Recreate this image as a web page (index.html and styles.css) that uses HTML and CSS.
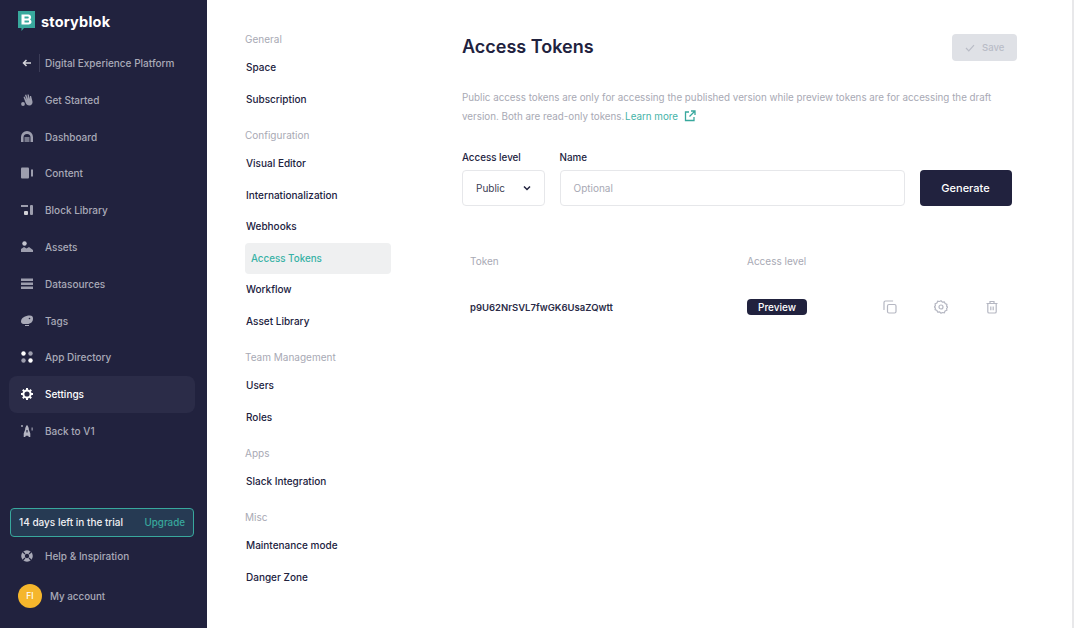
FILE: index.html
```html
<!DOCTYPE html>
<html lang="en">
<head>
  <meta charset="UTF-8">
  <title>Access Tokens - Storyblok</title>
  <link rel="stylesheet" href="styles.css">
</head>
<body>
  <div class="app">
    <aside class="sidebar">
      <div class="logo">
        <svg class="logo-mark" width="17" height="20" viewBox="0 0 17 20"><path d="M0 0h17v17H6l-2.500 3V17H0z" fill="#38a89d"/><path d="M3.500 3.500h7c3 0 3.300 4 1.500 5 2.300 1 2 5-1.300 5H3.500zM6.500 5.500v2h3.500c1 0 1-2 0-2zM6.500 9.600v2h3.800c1.100 0 1.100-2 0-2z" fill="#fff" fill-rule="evenodd"/></svg>
        <span class="logo-text">storyblok</span>
      </div>
      <nav class="side-nav">
        <a class="side-item back">
          <svg width="12" height="12" viewBox="0 0 12 12"><path d="M10 6H3M5.500 3L2.500 6l3 3" fill="none" stroke="#d5d6dc" stroke-width="1.500"/></svg>
          <span class="back-rule"></span>
          <span>Digital Experience Platform</span>
        </a>
        <a class="side-item">
          <svg width="12" height="12" viewBox="0 0 12 12" fill="#9d9eae"><circle cx="2" cy="10" r="1.900"/><path d="M4.500 8.500L2.500 3l1-.5 2 3.500-1.500-5 1.200-.4L7 5 6.500 .5 7.700.4 8.800 5 9 2l1.100.1 1.400 5.400c.4 2-1 4-3.200 4-1.800 0-3.100-1.200-3.800-3z"/></svg>
          <span>Get Started</span>
        </a>
        <a class="side-item">
          <svg width="12" height="12" viewBox="0 0 12 12" fill="#9d9eae"><path d="M0 11V6a6 6 0 0 1 12 0v5H9.500V6.500a3.500 3.500 0 0 0-7 0V11z"/><rect x="3.500" y="6" width="5" height="5" opacity=".7"/></svg>
          <span>Dashboard</span>
        </a>
        <a class="side-item">
          <svg width="12" height="12" viewBox="0 0 12 12" fill="#9d9eae"><rect x="0" y="0.500" width="8" height="11" rx="1"/><rect x="10" y="2.500" width="2" height="7"/></svg>
          <span>Content</span>
        </a>
        <a class="side-item">
          <svg width="12" height="12" viewBox="0 0 12 12" fill="#9d9eae"><rect x="0" y="1" width="7" height="2"/><rect x="3" y="7" width="4" height="4" rx="1" fill="#fff" opacity=".8"/><rect x="9" y="1" width="3" height="10" rx="1"/></svg>
          <span>Block Library</span>
        </a>
        <a class="side-item">
          <svg width="12" height="12" viewBox="0 0 12 12" fill="#9d9eae"><circle cx="3.500" cy="2.500" r="2.200" fill="#c5c6d0"/><path d="M0 11V8l3-2 2.500 1.500L8 6l4 3v2z"/></svg>
          <span>Assets</span>
        </a>
        <a class="side-item">
          <svg width="12" height="12" viewBox="0 0 12 12" fill="#9d9eae"><rect y="0.500" width="12" height="2.500"/><rect y="4.500" width="12" height="2.500"/><rect y="8.500" width="12" height="2.500"/></svg>
          <span>Datasources</span>
        </a>
        <a class="side-item">
          <svg width="12" height="12" viewBox="0 0 12 12" fill="#a9aab8"><path d="M0 6.500C0 3 4 .5 9 .5c2 0 3 1 3 3 0 3-2 5.500-6 5.500H2.500C1 9 0 8 0 6.500z"/><rect x="4" y="10" width="4" height="1"/><circle cx="8.500" cy="3.500" r=".8" fill="#21223e"/></svg>
          <span>Tags</span>
        </a>
        <a class="side-item">
          <svg width="12" height="12" viewBox="0 0 12 12"><circle cx="2.500" cy="2.500" r="2.200" fill="#fff"/><circle cx="9.500" cy="2.500" r="2.200" fill="#9d9eae"/><circle cx="2.500" cy="9.500" r="2.200" fill="#9d9eae"/><circle cx="9.500" cy="9.500" r="2.200" fill="#fff"/></svg>
          <span>App Directory</span>
        </a>
        <a class="side-item active">
          <svg width="12" height="12" viewBox="0 0 12 12"><circle cx="6" cy="6" r="3.600" fill="none" stroke="#fff" stroke-width="2"/><path d="M6 0v2M6 10v2M0 6h2M10 6h2M1.800 1.800l1.400 1.400M8.800 8.800l1.400 1.400M1.800 10.200l1.400-1.400M8.800 3.200l1.400-1.400" stroke="#fff" stroke-width="2"/></svg>
          <span>Settings</span>
        </a>
        <a class="side-item">
          <svg width="12" height="12" viewBox="0 0 12 12" fill="#b4b5c2"><path d="M6 0c1.300 1.300 1.900 2.800 1.900 4.800L9.300 8.500V12H7.800L7.200 10.800H4.800L4.200 12H2.700V8.500L4.100 4.800C4.100 2.800 4.700 1.300 6 0z"/><circle cx="1" cy="1" r=".9"/><rect x="10.600" y="2.500" width="1" height="3"/><rect x="5.400" y="5" width="1.200" height="2.500" fill="#21223e"/></svg>
          <span>Back to V1</span>
        </a>
      </nav>
      <div class="side-bottom">
        <div class="trial"><span>14 days left in the trial</span><a class="upgrade">Upgrade</a></div>
        <a class="side-item help">
          <svg width="12" height="12" viewBox="0 0 12 12"><circle cx="6" cy="6" r="4" fill="none" stroke="#a9aab8" stroke-width="3.600"/><path d="M2 2l2 2M10 2L8 4M2 10l2-2M10 10L8 8" stroke="#21223e" stroke-width="1.200"/></svg>
          <span>Help &amp; Inspiration</span>
        </a>
        <a class="account"><span class="avatar">FI</span><span>My account</span></a>
      </div>
    </aside>

    <nav class="sub-nav">
      <h4>General</h4>
      <a>Space</a>
      <a>Subscription</a>
      <h4>Configuration</h4>
      <a>Visual Editor</a>
      <a>Internationalization</a>
      <a>Webhooks</a>
      <a class="current">Access Tokens</a>
      <a>Workflow</a>
      <a>Asset Library</a>
      <h4>Team Management</h4>
      <a>Users</a>
      <a>Roles</a>
      <h4>Apps</h4>
      <a>Slack Integration</a>
      <h4>Misc</h4>
      <a>Maintenance mode</a>
      <a>Danger Zone</a>
    </nav>

    <main class="content">
      <header class="head">
        <h1>Access Tokens</h1>
        <button class="save">
          <svg width="10" height="8" viewBox="0 0 10 8"><path d="M1 4l2.800 2.800L9 1.200" fill="none" stroke="#b9bcc6" stroke-width="1.200"/></svg>
          Save
        </button>
      </header>
      <p class="intro">Public access tokens are only for accessing the published version while preview tokens are for accessing the draft version. Both are read-only tokens. <span class="learn">Learn more</span> <svg class="learn-icon" width="12" height="12" viewBox="0 0 12 12"><path d="M5 2H1.500v8.500H10V7M7 1h4v4M11 1L5.500 6.500" fill="none" stroke="#38a89d" stroke-width="1.300"/></svg></p>
      <form class="token-form">
        <div class="field level">
          <label>Access level</label>
          <div class="select">Public
            <svg width="8" height="6" viewBox="0 0 8 6"><path d="M1 1.500l3 3 3-3" fill="none" stroke="#21223e" stroke-width="1.500"/></svg>
          </div>
        </div>
        <div class="field name">
          <label>Name</label>
          <div class="input">Optional</div>
        </div>
        <button class="generate" type="button">Generate</button>
      </form>
      <div class="table-head">
        <span class="col-token">Token</span>
        <span>Access level</span>
      </div>
      <div class="table-row">
        <span class="col-token token">p9U62NrSVL7fwGK6UsaZQwtt</span>
        <span class="col-level"><span class="badge">Preview</span></span>
        <span class="actions">
          <svg width="14" height="14" viewBox="0 0 14 14" fill="none" stroke="#b5b7c2" stroke-width="1.200"><rect x="4.500" y="4.500" width="8.500" height="8.500" rx="1.500"/><path d="M9.500 1.500V1H2.500A1.500 1.500 0 0 0 1 2.500v7h.5"/></svg>
          <svg width="14" height="14" viewBox="0 0 14 14" fill="none" stroke="#b5b7c2" stroke-width="1.200"><path d="M7 .8l1.400 1.300 1.900-.3.800 1.800 1.800.8-.3 1.900L13.800 7l-1.200 1.500.3 1.700-1.800.8-.8 1.800-1.900-.3L7 13.200l-1.400-1.300-1.900.3-.8-1.800-1.800-.8.3-1.700L.2 7l1.200-1.300-.3-1.900 1.800-.8.800-1.800 1.900.3z"/><circle cx="7" cy="7" r="2"/></svg>
          <svg width="14" height="14" viewBox="0 0 14 14" fill="none" stroke="#b5b7c2" stroke-width="1.200"><path d="M1.500 3.500h11M5 3.500V1.500h4v2M2.800 3.500v8.200c0 .8.500 1.300 1.300 1.300h5.800c.8 0 1.300-.5 1.300-1.300V3.500M5.800 6.500v3.800M8.200 6.500v3.800"/></svg>
        </span>
      </div>
    </main>
  </div>
</body>
</html>
```

FILE: styles.css
```css
* { box-sizing: border-box; }
html, body { height: 100%; }
body { margin: 0; font-family: Inter, "Liberation Sans", sans-serif; font-size: 10px; color: #21223e; background: #fff; overflow: hidden; }
a { display: block; text-decoration: none; }
svg { flex: none; display: block; }

.app { display: flex; height: 628px; width: 1074px; border-right: 2px solid #e8e8ea; }

.sidebar { width: 207px; flex: none; background: #21223e; display: flex; flex-direction: column; padding: 0 12px 0 9px; color: #a9aab8; }
.logo { display: flex; align-items: center; gap: 6px; height: 34px; margin: 4px 0 0 9px; }
.logo-text { font-size: 14.5px; font-weight: 700; color: #fff; letter-spacing: 0.2px; }

.side-nav { margin-top: 6.6px; }
.side-item { display: flex; align-items: center; gap: 12px; height: 36.8px; padding-left: 12px; font-weight: 500; border-radius: 8px; }
.side-item.active { color: #fff; background: #2b2c48; }
.back { gap: 0; }
.back svg { margin-right: 6px; }
.back-rule { width: 1px; height: 18px; background: #3b3c57; margin-right: 5px; }

.side-bottom { margin-top: auto; padding-bottom: 14px; }
.trial { display: flex; justify-content: space-between; align-items: center; height: 29px; margin: 0 1px; padding: 0 8px 1px; background: #263a53; border: 1.500px solid #38a89d; border-radius: 4px; color: #f0f0f3; font-weight: 500; }
.upgrade { color: #38a89d; font-weight: 500; font-size: 9.8px; }
.help { margin-top: 0; }
.account { display: flex; align-items: center; gap: 8px; height: 36px; margin: 4px 0 0 9px; color: #a9aab8; font-weight: 500; font-size: 9.8px; }
.avatar { width: 24px; height: 24px; border-radius: 50%; background: #f5b62c; color: #fff; font-size: 8.5px; display: flex; align-items: center; justify-content: center; }

.sub-nav { width: 184px; flex: none; padding: 32px 0 0 38px; display: flex; flex-direction: column; }
.sub-nav h4 { margin: 0; height: 14px; line-height: 14px; font-size: 10px; font-weight: 400; color: #a8a9b4; }
.sub-nav h4 + a { margin-top: 6.2px; }
.sub-nav a { height: 31.6px; line-height: 31.6px; padding-left: 1px; font-weight: 500; color: #21223e; border-radius: 4px; width: 146px; flex: none; }
.sub-nav a + h4 { margin-top: 12.5px; }
.sub-nav .current { color: #38b2a6; background: #eff0f1; padding-left: 6px; font-size: 9.8px; }

.content { flex: 1; padding: 0 55px 0 71px; }
.head { display: flex; justify-content: space-between; align-items: flex-start; padding-top: 34px; height: 61px; }
.head h1 { margin: 1px 0 0; font-size: 18px; line-height: 24px; font-weight: 600; color: #21223e; }
.save { display: flex; align-items: center; gap: 7px; width: 65px; height: 27px; padding-left: 13px; border: 0; border-radius: 4px; background: #dfe1e6; color: #b9bcc6; font: 500 9.5px Inter, sans-serif; }
.intro { margin: 27px 0 0; width: 540px; font-size: 9.8px; line-height: 19px; color: #a8a9b4; }
.learn { color: #45b3a8; margin-left: -2px; }
.learn-icon { display: inline-block; vertical-align: -2px; margin-left: 3px; }

.token-form { display: flex; align-items: flex-end; margin-top: 25px; }
.field label { display: block; font-weight: 500; margin-bottom: 6px; line-height: 13px; font-size: 9.8px; }
.select { width: 82.5px; height: 36px; display: flex; align-items: center; justify-content: space-between; padding: 0 13px; border: 1px solid #e6e7ea; border-radius: 4px; color: #3b3c54; }
.name { margin-left: 15px; }
.input { width: 345px; height: 36px; display: flex; align-items: center; padding: 0 13px; border: 1px solid #e6e7ea; border-radius: 4px; color: #a8a9b4; }
.generate { width: 92px; height: 36px; margin-left: 15px; border: 0; border-radius: 4px; background: #21223e; color: #fff; font: 500 11px Inter, sans-serif; }

.table-head { display: flex; margin-top: 48px; height: 14px; line-height: 14px; color: #a8a9b4; }
.col-token { width: 285px; padding-left: 8px; flex: none; }
.table-row { display: flex; align-items: center; margin-top: 27px; height: 24px; }
.token { font-size: 9.5px; font-weight: 600; color: #2b2c48; }
.col-level { width: 136px; flex: none; }
.badge { display: block; width: 60px; height: 16px; line-height: 16px; text-align: center; border-radius: 4px; background: #21223e; color: #fff; font-size: 10px; font-weight: 500; }
.actions { display: flex; gap: 37px; }
```
